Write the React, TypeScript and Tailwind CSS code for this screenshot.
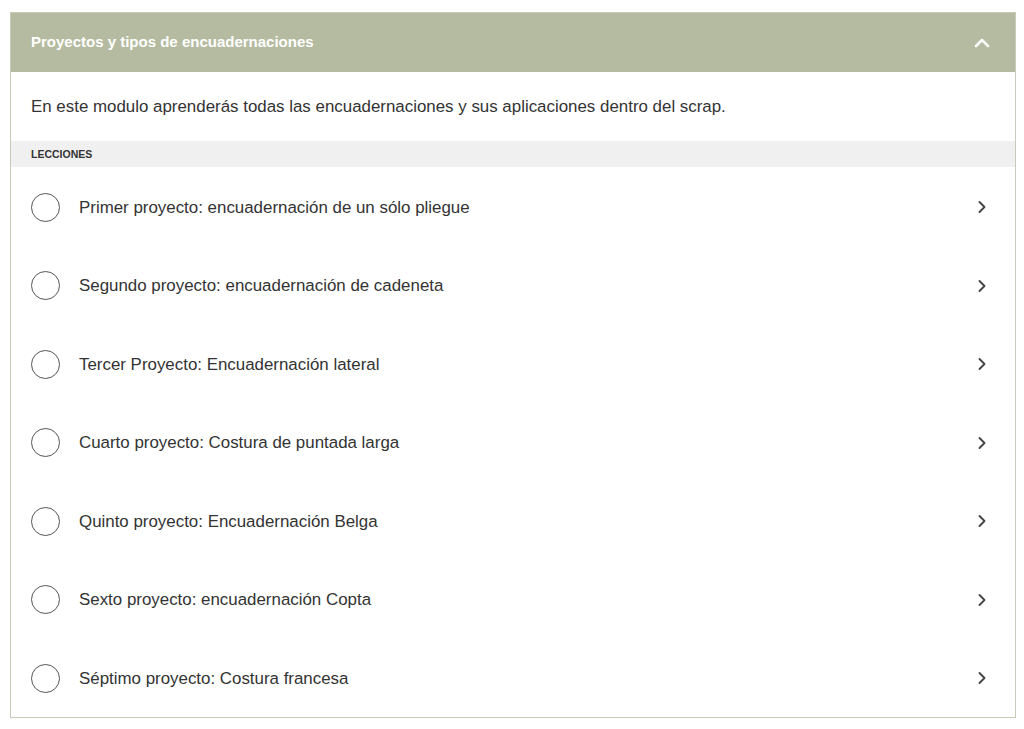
import { ChevronRight, ChevronUp } from "lucide-react";

const lessons = [
  "Primer proyecto: encuadernación de un sólo pliegue",
  "Segundo proyecto: encuadernación de cadeneta",
  "Tercer Proyecto: Encuadernación lateral",
  "Cuarto proyecto: Costura de puntada larga",
  "Quinto proyecto: Encuadernación Belga",
  "Sexto proyecto: encuadernación Copta",
  "Séptimo proyecto: Costura francesa",
];

export default function App() {
  return (
    <div
      className="min-h-screen bg-white px-[10px] pt-[12px]"
      style={{ fontFamily: '"Liberation Sans", Arial, sans-serif' }}
    >
      <div className="w-[1006px] border border-[#c9cbba]">
        {/* Module header */}
        <div className="flex h-[59px] items-center justify-between bg-[#b5bba0] pl-[20px] pr-[21px]">
          <h3 className="text-[15px] font-bold text-white">
            Proyectos y tipos de encuadernaciones
          </h3>
          <ChevronUp className="h-[24px] w-[24px] text-white" strokeWidth={2.5} />
        </div>

        <div className="flex h-[69px] items-center px-[20px]">
          <p className="text-[16.9px] text-[#333]">
            En este modulo aprenderás todas las encuadernaciones y sus aplicaciones dentro del scrap.
          </p>
        </div>

        <div className="flex h-[26px] items-center bg-[#f0f0f0] px-[20px] pt-[2px]">
          <span className="text-[10.5px] font-bold uppercase text-[#333]">Lecciones</span>
        </div>

        <ul>
          {lessons.map((title) => (
            <li
              key={title}
              className="flex h-[78.5px] items-center justify-between pl-[20px] pr-[23px] pt-[2px]"
            >
              <div className="flex items-center gap-[19px]">
                <span className="h-[29px] w-[29px] rounded-full border-[1.5px] border-[#555]" />
                <span className="text-[16.9px] text-[#333]">{title}</span>
              </div>
              <ChevronRight className="h-[20px] w-[20px] text-[#444]" strokeWidth={2.25} />
            </li>
          ))}
        </ul>
      </div>
    </div>
  );
}
